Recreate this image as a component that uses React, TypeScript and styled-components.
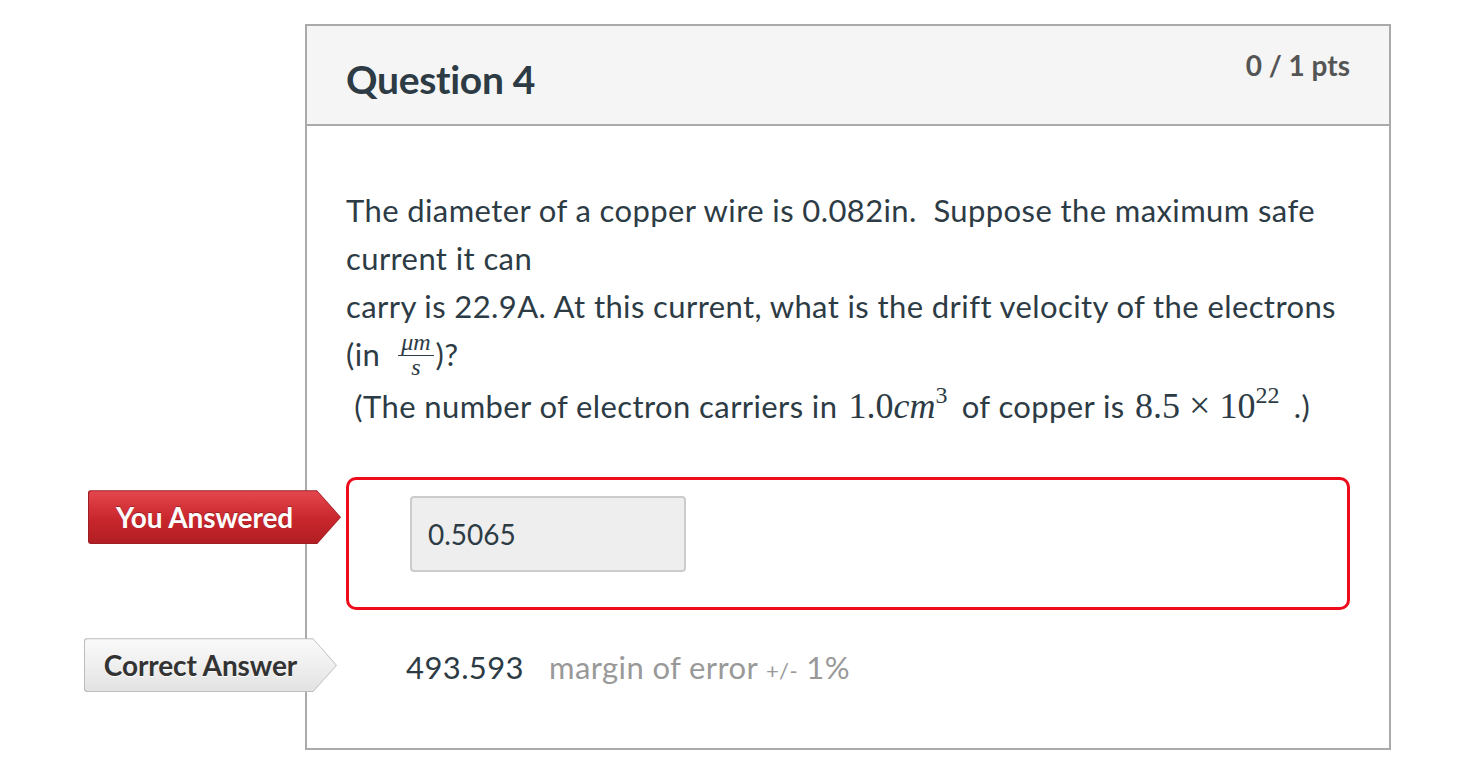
import React from "react";
import styled, { createGlobalStyle } from "styled-components";

const GlobalStyle = createGlobalStyle`
  body {
    margin: 0;
    background: #ffffff;
    font-family: Lato, "Noto Sans", sans-serif;
  }
`;

const Page = styled.div`
  padding: 24px 0 0 305px;
`;

const Card = styled.div`
  width: 1082px;
  border: 2px solid #aaaaaa;
  background: #ffffff;
`;

const Header = styled.div`
  height: 98px;
  background: #f5f5f5;
  border-bottom: 2px solid #aaaaaa;
  display: flex;
  justify-content: space-between;
  align-items: flex-start;
  padding: 0 39px 0 39px;
`;

const Title = styled.h2`
  margin: 0;
  padding-top: 30px;
  font-size: 39px;
  font-weight: 700;
  color: #2d3b45;
  letter-spacing: -0.3px;
`;

const Points = styled.div`
  padding-top: 22px;
  font-size: 28px;
  font-weight: 700;
  color: #555555;
`;

const Body = styled.div`
  padding: 60px 39px 54px 39px;
`;

const QuestionText = styled.div`
  font-size: 31px;
  letter-spacing: 0.4px;
  line-height: 48px;
  color: #2d3b45;
`;

const Fraction = styled.span`
  display: inline-flex;
  flex-direction: column;
  align-items: center;
  vertical-align: middle;
  margin: 0 2px 0 18px;
  font-family: "Liberation Serif", "DejaVu Serif", serif;
  font-style: italic;
  font-size: 24px;
  line-height: 21px;
  letter-spacing: 0;
  position: relative;
  top: -3px;
`;

const FracTop = styled.span`
  border-bottom: 1.5px solid #2d3b45;
  padding: 0 3px 2px;
`;

const FracBottom = styled.span`
  padding-top: 1px;
`;

const MathText = styled.span`
  font-family: "Liberation Serif", "DejaVu Serif", serif;
  font-size: 36px;
  letter-spacing: 0;
  margin: 0 6px 0 2px;
`;

const MathVar = styled.i`
  font-style: italic;
`;

const Times = styled.span`
  font-size: 38px;
  margin: 0 9px;
`;

const Sup = styled.sup`
  font-size: 24px;
  vertical-align: 15px;
  line-height: 0;
`;

const AnswerRow = styled.div`
  position: relative;
  margin-top: 47px;
`;

const AnswerBox = styled.div`
  border: 3px solid #ee0b1c;
  border-radius: 10px;
  height: 133px;
  padding: 16px 0 0 61px;
  box-sizing: border-box;
  width: 1004px;
`;

const AnswerInput = styled.div`
  width: 276px;
  height: 76px;
  background: #eeeeee;
  border: 2px solid #cccccc;
  border-radius: 4px;
  font-size: 28px;
  color: #2d3b45;
  display: flex;
  align-items: center;
  padding-left: 16px;
  box-sizing: border-box;
`;

const LabelShape = styled.div<{ $tone: "red" | "gray"; $top: number; $left: number }>`
  position: absolute;
  left: ${(p) => p.$left}px;
  top: ${(p) => p.$top}px;
  width: 253px;
  height: 54px;
  background: ${(p) => (p.$tone === "red" ? "#9e1d22" : "#bdbdbd")};
  clip-path: polygon(0 0, 229px 0, 253px 50%, 229px 100%, 0 100%);
  border-radius: 3px 0 0 3px;
`;

const LabelInner = styled.div<{ $tone: "red" | "gray" }>`
  position: absolute;
  inset: 1px;
  background: ${(p) =>
    p.$tone === "red"
      ? "linear-gradient(#e3474d, #c8262c 55%, #b21e23)"
      : "linear-gradient(#fafafa, #eeeeee 55%, #e2e2e2)"};
  clip-path: polygon(0 0, 228px 0, 251px 50%, 228px 100%, 0 100%);
  border-radius: 3px 0 0 3px;
  display: flex;
  align-items: center;
  justify-content: center;
  padding-right: 20px;
  font-size: 28px;
  font-weight: 700;
  letter-spacing: -0.1px;
  color: ${(p) => (p.$tone === "red" ? "#ffffff" : "#333333")};
  text-shadow: ${(p) =>
    p.$tone === "red" ? "0 -1px 0 rgba(0,0,0,0.3)" : "0 1px 0 #ffffff"};
`;

const CorrectRow = styled.div`
  position: relative;
  margin-top: 28px;
  height: 54px;
  display: flex;
  align-items: center;
  padding-left: 60px;
  font-size: 31px;
  letter-spacing: 0.4px;
  padding-top: 2px;
`;

const Value = styled.span`
  color: #2d3b45;
`;

const Margin = styled.span`
  color: #999999;
  margin-left: 25px;
`;

const Small = styled.span`
  font-size: 22px;
`;

export default function App() {
  return (
    <>
      <GlobalStyle />
      <Page>
        <Card>
          <Header>
            <Title>Question 4</Title>
            <Points>0 / 1 pts</Points>
          </Header>
          <Body>
            <QuestionText>
              The diameter of a copper wire is 0.082in.&nbsp; Suppose the maximum safe
              <br />
              current it can
              <br />
              carry is 22.9A. At this current, what is the drift velocity of the electrons
              <br />
              (in
              <Fraction>
                <FracTop>μm</FracTop>
                <FracBottom>s</FracBottom>
              </Fraction>
              )?
              <br />
              &nbsp;(The number of electron carriers in
              <MathText>
                {" "}1.0<MathVar>cm</MathVar>
                <Sup>3</Sup>
              </MathText>
              {" "}of copper is{" "}
              <MathText>
                8.5<Times>×</Times>10<Sup>22</Sup>
              </MathText>
              {" "}.)
            </QuestionText>
            <AnswerRow>
              <LabelShape $tone="red" $top={13} $left={-258}>
                <LabelInner $tone="red">You Answered</LabelInner>
              </LabelShape>
              <AnswerBox>
                <AnswerInput>0.5065</AnswerInput>
              </AnswerBox>
            </AnswerRow>
            <CorrectRow>
              <LabelShape $tone="gray" $top={0} $left={-262}>
                <LabelInner $tone="gray">Correct Answer</LabelInner>
              </LabelShape>
              <Value>493.593</Value>
              <Margin>
                margin of error <Small>+/-</Small> 1%
              </Margin>
            </CorrectRow>
          </Body>
        </Card>
      </Page>
    </>
  );
}
